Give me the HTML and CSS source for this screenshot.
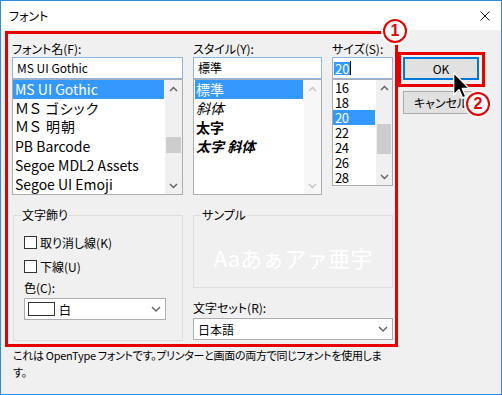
FILE: index.html
```html
<!DOCTYPE html>
<html lang="ja">

<head>
    <meta charset="UTF-8">
    <meta name="viewport" content="width=device-width, initial-scale=1.0">
    <title>フォント</title>
    <link rel="stylesheet" href="styles.css">
</head>

<body>
    <div class="window">
        <div class="titlebar">
            <span class="title">フォント</span>
            <svg class="close" width="10" height="10" viewBox="0 0 10 10">
                <path d="M0.5 0.5L9.5 9.5M9.5 0.5L0.5 9.5" stroke="#1a1a1a" stroke-width="1" fill="none" />
            </svg>
        </div>

        <div class="dialog">
            <div class="top">
                <!-- フォント名 -->
                <div class="col col-font">
                    <span class="lbl">フォント名(F):</span>
                    <div class="field">MS UI Gothic</div>
                    <div class="listbox list-font">
                        <ul class="items">
                            <li class="sel">MS UI Gothic</li>
                            <li class="wide">ＭＳ ゴシック</li>
                            <li class="wide mincho">ＭＳ 明朝</li>
                            <li>PB Barcode</li>
                            <li>Segoe MDL2 Assets</li>
                            <li>Segoe UI Emoji</li>
                        </ul>
                        <div class="scroll">
                            <div class="arrow"><svg width="9" height="6" viewBox="0 0 9 6"><path d="M1 5L4.5 1.5L8 5" /></svg></div>
                            <div class="track"><div class="thumb thumb-font"></div></div>
                            <div class="arrow"><svg width="9" height="6" viewBox="0 0 9 6"><path d="M1 1L4.5 4.5L8 1" /></svg></div>
                        </div>
                    </div>
                </div>

                <!-- スタイル -->
                <div class="col col-style">
                    <span class="lbl">スタイル(Y):</span>
                    <div class="field">標準</div>
                    <div class="listbox list-style">
                        <ul class="items">
                            <li class="sel">標準</li>
                            <li class="it">斜体</li>
                            <li class="bd">太字</li>
                            <li class="bd it">太字 斜体</li>
                        </ul>
                        <div class="scroll disabled">
                            <div class="arrow"><svg width="9" height="6" viewBox="0 0 9 6"><path d="M1 5L4.5 1.5L8 5" /></svg></div>
                            <div class="track"></div>
                            <div class="arrow"><svg width="9" height="6" viewBox="0 0 9 6"><path d="M1 1L4.5 4.5L8 1" /></svg></div>
                        </div>
                    </div>
                </div>

                <!-- サイズ -->
                <div class="col col-size">
                    <span class="lbl">サイズ(S):</span>
                    <div class="field size-field"><span class="selected">20</span><span class="caret"></span></div>
                    <div class="listbox list-size">
                        <ul class="items">
                            <li>16</li>
                            <li>18</li>
                            <li class="sel">20</li>
                            <li>22</li>
                            <li>24</li>
                            <li>26</li>
                            <li>28</li>
                        </ul>
                        <div class="scroll narrow">
                            <div class="arrow"><svg width="9" height="6" viewBox="0 0 9 6"><path d="M1 5L4.5 1.5L8 5" /></svg></div>
                            <div class="track"><div class="thumb thumb-size"></div></div>
                            <div class="arrow"><svg width="9" height="6" viewBox="0 0 9 6"><path d="M1 1L4.5 4.5L8 1" /></svg></div>
                        </div>
                    </div>
                </div>

                <div class="buttons">
                    <button class="btn btn-default">OK</button>
                    <button class="btn">キャンセル</button>
                </div>
            </div>

            <div class="bottom">
                <fieldset class="group group-effects">
                    <legend>文字飾り</legend>
                    <div class="check-row"><span class="box"></span>取り消し線(K)</div>
                    <div class="check-row second"><span class="box"></span>下線(U)</div>
                    <span class="lbl small-lbl">色(C):</span>
                    <div class="combo combo-color">
                        <span class="swatch"></span>
                        <span class="combo-text">白</span>
                        <svg class="chev" width="10" height="6" viewBox="0 0 10 6"><path d="M1 1L5 5L9 1" /></svg>
                    </div>
                </fieldset>

                <div class="right">
                    <fieldset class="group group-sample">
                        <legend>サンプル</legend>
                        <div class="sample">Aaあぁアァ亜宇</div>
                    </fieldset>
                    <span class="lbl small-lbl charset-lbl">文字セット(R):</span>
                    <div class="combo combo-charset">
                        <span class="combo-text">日本語</span>
                        <svg class="chev" width="10" height="6" viewBox="0 0 10 6"><path d="M1 1L5 5L9 1" /></svg>
                    </div>
                </div>
            </div>

            <p class="desc">これは OpenType フォントです。プリンターと画面の両方で同じフォントを使用します。</p>
        </div>

        <!-- 注釈 -->
        <div class="mark mark-main"></div>
        <div class="mark mark-ok"></div>
        <div class="badge badge-1">1</div>
        <div class="badge badge-2">2</div>
        <svg class="cursor" width="17" height="27" viewBox="0 0 12 19">
            <path d="M0.5 0.5L0.5 16L4.2 12.4L6.8 18.2L9 17.2L6.5 11.6L11.5 11.6Z" fill="#000" stroke="#fff" stroke-width="0.9" stroke-linejoin="round" />
        </svg>
    </div>
</body>

</html>
```

FILE: styles.css
```css
* {
    box-sizing: border-box;
}

body {
    margin: 0;
    font-family: "Noto Sans CJK JP", sans-serif;
    font-size: 12px;
    color: #000;
    font-feature-settings: "palt";
}

.window {
    position: relative;
    width: 502px;
    height: 395px;
    border: 1px solid #2f8bdc;
    background-color: #f0f0f0;
    overflow: hidden;
}

.titlebar {
    height: 29px;
    background-color: #fff;
    display: flex;
    align-items: center;
    justify-content: space-between;
    padding: 0 11px 0 8px;
}

.title {
    font-size: 12px;
    line-height: 14px;
}

.dialog {
    padding: 11px 0 0 11px;
}

/* 上段 */
.top {
    display: flex;
    gap: 10px;
    align-items: flex-start;
}

.col-font {
    width: 171px;
}

.col-style {
    width: 129px;
}

.col-size {
    width: 61px;
}

.lbl {
    display: block;
    height: 16px;
    line-height: 16px;
}

.field {
    height: 22px;
    border: 1px solid #8fb6e3;
    background-color: #fff;
    line-height: 20px;
    padding-left: 4px;
}

.size-field {
    display: flex;
    align-items: center;
    padding-left: 1px;
}

.selected {
    background-color: #3399ff;
    color: #fff;
    line-height: 13px;
    padding: 0 1px;
    font-size: 13px;
}

.caret {
    width: 1px;
    height: 14px;
    background-color: #000;
}

.listbox {
    display: flex;
    border: 1px solid #abadb3;
    background-color: #fff;
}

.list-font,
.list-style {
    height: 116px;
}

.list-size {
    height: 107px;
}

.items {
    flex: 1;
    list-style: none;
    margin: 0;
    padding: 0 1px 0 0;
    overflow: hidden;
}

.items li {
    height: 19px;
    line-height: 19px;
    padding-left: 2px;
    font-size: 14px;
    white-space: nowrap;
}

.items li.sel {
    background-color: #3399ff;
    color: #fff;
}

.list-style .items li {
    padding-left: 1px;
    margin-left: 1px;
    font-size: 14px;
}

.list-size .items li {
    height: 15px;
    line-height: 15px;
    font-size: 13px;
    letter-spacing: -0.5px;
}

.wide {
    letter-spacing: 1px;
}

.mincho {
    font-family: "Liberation Serif", "Noto Sans CJK JP", serif;
    font-size: 15px;
}

.it {
    font-style: italic;
}

.bd {
    font-weight: bold;
}

/* スクロールバー */
.scroll {
    width: 17px;
    display: flex;
    flex-direction: column;
    background-color: #f0f0f0;
}

.scroll.narrow {
    width: 16px;
}

.scroll.disabled {
    background-color: #f7f7f7;
}

.arrow {
    height: 17px;
    display: flex;
    align-items: center;
    justify-content: center;
}

.narrow .arrow {
    height: 16px;
}

.arrow path,
.chev path {
    fill: none;
    stroke: #606060;
    stroke-width: 1.4;
}

.disabled .arrow path {
    stroke: #c4c4c4;
}

.track {
    flex: 1;
}

.thumb {
    background-color: #cdcdcd;
    margin: 0 1px;
}

.thumb-font {
    margin-top: 40px;
    height: 16px;
}

.thumb-size {
    margin-top: 28px;
    height: 30px;
}

/* ボタン */
.buttons {
    width: 76px;
    padding-top: 16px;
    display: flex;
    flex-direction: column;
    gap: 11px;
}

.btn {
    height: 23px;
    border: 1px solid #adadad;
    background-color: #e1e1e1;
    font-family: inherit;
    font-size: 12px;
    font-feature-settings: "palt";
    padding: 0;
    color: #000;
}

.btn-default {
    border: 2px solid #0078d7;
}

/* 下段 */
.bottom {
    display: flex;
    gap: 10px;
    margin-top: 13px;
    align-items: flex-start;
}

.group {
    margin: 0;
    border: 1px solid #dcdcdc;
    min-width: 0;
}

.group legend {
    line-height: 14px;
    padding: 0 1px;
}

.group-effects {
    margin-left: 1px;
    width: 170px;
    height: 133px;
    padding: 13px 0 0 10px;
}

.group-effects legend {
    margin-left: -3px;
}

.check-row {
    display: flex;
    align-items: center;
    gap: 3px;
    height: 14px;
}

.check-row.second {
    margin-top: 10px;
}

.box {
    width: 13px;
    height: 13px;
    border: 1px solid #333;
    background-color: #fff;
}

.small-lbl {
    height: 14px;
    line-height: 14px;
    margin-top: 8px;
}

.combo {
    height: 22px;
    display: flex;
    align-items: center;
    border: 1px solid #abadb3;
    background-color: #fff;
    margin-top: 3px;
}

.combo-color {
    width: 142px;
    padding-left: 3px;
}

.swatch {
    width: 27px;
    height: 14px;
    border: 1px solid #333;
    background-color: #fff;
}

.combo-text {
    margin-left: 4px;
}

.chev {
    margin-left: auto;
    margin-right: 4px;
}

.right {
    width: 200px;
}

.group-sample {
    height: 80px;
    padding: 0;
}

.group-sample legend {
    margin-left: 7px;
}

.sample {
    margin-top: 20px;
    line-height: 30px;
    text-align: center;
    font-size: 22px;
    color: #fff;
    font-feature-settings: normal;
}

.charset-lbl {
    margin-top: 13px;
}

.combo-charset {
    width: 200px;
}

.desc {
    margin: 6px 0 0 1px;
    width: 378px;
    font-size: 11px;
    letter-spacing: -0.3px;
    line-height: 17px;
}

/* 注釈 */
.mark {
    position: absolute;
    border: 3px solid #e60000;
}

.mark-main {
    left: 4px;
    top: 30px;
    width: 393px;
    height: 316px;
}

.mark-ok {
    left: 397px;
    top: 51px;
    width: 87px;
    height: 35px;
}

.badge {
    position: absolute;
    width: 24px;
    height: 24px;
    border: 2px solid #e60000;
    border-radius: 50%;
    background-color: #fff;
    box-shadow: 0 0 0 2px #fff;
    color: #e60000;
    font-family: "Liberation Sans", sans-serif;
    font-weight: bold;
    font-size: 16px;
    line-height: 20px;
    text-align: center;
}

.badge-1 {
    left: 382px;
    top: 18px;
}

.badge-2 {
    left: 465px;
    top: 91px;
}

.cursor {
    position: absolute;
    left: 452px;
    top: 71px;
}
```
